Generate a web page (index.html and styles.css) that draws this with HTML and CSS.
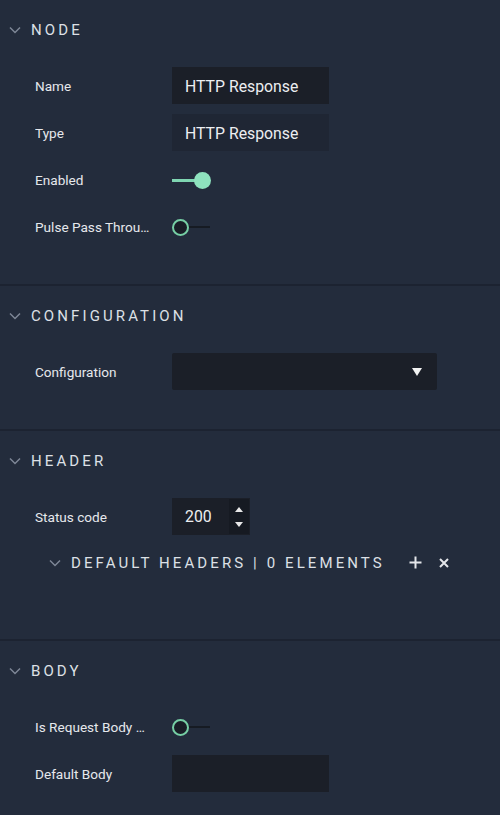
FILE: index.html
```html
<!DOCTYPE html>
<html>
<head>
<meta charset="utf-8">
<link rel="stylesheet" href="styles.css">
</head>
<body>
<div class="panel">
  <section class="sec">
    <div class="sec-head">
      <svg class="chev" width="12" height="8" viewBox="0 0 12 8"><path d="M1 1.5 L6 6.5 L11 1.5" fill="none" stroke="#7e8796" stroke-width="1.5"/></svg>
      <span>NODE</span>
    </div>
    <div class="rows">
      <div class="row"><div class="label">Name</div><div class="input">HTTP Response</div></div>
      <div class="row"><div class="label">Type</div><div class="input ro">HTTP Response</div></div>
      <div class="row"><div class="label">Enabled</div><div class="toggle on"><span class="track"></span><span class="knob"></span></div></div>
      <div class="row"><div class="label">Pulse Pass Through</div><div class="toggle off"><span class="track"></span><span class="knob"></span></div></div>
    </div>
  </section>
  <section class="sec">
    <div class="sec-head">
      <svg class="chev" width="12" height="8" viewBox="0 0 12 8"><path d="M1 1.5 L6 6.5 L11 1.5" fill="none" stroke="#7e8796" stroke-width="1.5"/></svg>
      <span>CONFIGURATION</span>
    </div>
    <div class="rows">
      <div class="row"><div class="label">Configuration</div><div class="select"><svg width="10" height="8" viewBox="0 0 10 8"><path d="M0 0 H10 L5 8 Z" fill="#f2f2f2"/></svg></div></div>
    </div>
  </section>
  <section class="sec">
    <div class="sec-head">
      <svg class="chev" width="12" height="8" viewBox="0 0 12 8"><path d="M1 1.5 L6 6.5 L11 1.5" fill="none" stroke="#7e8796" stroke-width="1.5"/></svg>
      <span>HEADER</span>
    </div>
    <div class="rows">
      <div class="row"><div class="label">Status code</div>
        <div class="number"><span class="num">200</span>
          <div class="spin">
            <svg width="8" height="5" viewBox="0 0 8 5"><path d="M0 5 L4 0 L8 5 Z" fill="#e8e8e8"/></svg>
            <svg width="8" height="5" viewBox="0 0 8 5"><path d="M0 0 L8 0 L4 5 Z" fill="#e8e8e8"/></svg>
          </div>
        </div>
      </div>
      <div class="sub-head">
        <svg class="chev" width="12" height="8" viewBox="0 0 12 8"><path d="M1 1.5 L6 6.5 L11 1.5" fill="none" stroke="#7e8796" stroke-width="1.5"/></svg>
        <span>DEFAULT HEADERS | 0 ELEMENTS</span>
        <svg class="plus" width="13" height="13" viewBox="0 0 13 13"><path d="M6.5 0.5 V12.5 M0.5 6.5 H12.5" stroke="#e4e6ea" stroke-width="2"/></svg>
        <svg class="cross" width="10" height="10" viewBox="0 0 10 10"><path d="M1 1 L9 9 M9 1 L1 9" stroke="#e4e6ea" stroke-width="2"/></svg>
      </div>
    </div>
  </section>
  <section class="sec last">
    <div class="sec-head">
      <svg class="chev" width="12" height="8" viewBox="0 0 12 8"><path d="M1 1.5 L6 6.5 L11 1.5" fill="none" stroke="#7e8796" stroke-width="1.5"/></svg>
      <span>BODY</span>
    </div>
    <div class="rows">
      <div class="row"><div class="label">Is Request Body Required</div><div class="toggle off"><span class="track"></span><span class="knob"></span></div></div>
      <div class="row"><div class="label">Default Body</div><div class="input"></div></div>
    </div>
  </section>
</div>
</body>
</html>
```

FILE: styles.css
```css
html, body {
  margin: 0;
  padding: 0;
  background: #232c3c;
}
body {
  width: 500px;
  height: 815px;
  overflow: hidden;
  font-family: Roboto, "Liberation Sans", sans-serif;
  color: #e3e5e9;
}
.panel {
  display: flex;
  flex-direction: column;
}
.sec {
  background: #232c3c;
  border-bottom: 2px solid #1c2331;
  padding-bottom: 39px;
}
.sec.last {
  border-bottom: none;
}
.sec-head {
  height: 57px;
  display: flex;
  align-items: center;
  padding-left: 9px;
  padding-top: 3px;
  box-sizing: border-box;
}
.chev {
  margin-right: 10px;
}
.sec-head span, .sub-head span {
  font-size: 15px;
  letter-spacing: 3.1px;
  color: #dde0e6;
  font-weight: 400;
}
.rows {
  display: flex;
  flex-direction: column;
  gap: 10px;
  margin-top: 10px;
  padding-left: 35px;
}
.row {
  height: 37px;
  display: flex;
  align-items: center;
}
.label {
  width: 116px;
  margin-right: 21px;
  font-size: 13.6px;
  color: #e6e8ec;
  white-space: nowrap;
  overflow: hidden;
  text-overflow: ellipsis;
}
.input {
  width: 157px;
  height: 37px;
  box-sizing: border-box;
  background: #1b1f28;
  padding-left: 13px;
  padding-top: 1px;
  display: flex;
  align-items: center;
  font-size: 15.8px;
  color: #eceef1;
}
.input.ro {
  background: #1f2634;
}
.toggle {
  position: relative;
  width: 40px;
  height: 20px;
}
.toggle .track {
  position: absolute;
  top: 9px;
  height: 2px;
}
.toggle .knob {
  position: absolute;
  border-radius: 50%;
  box-sizing: border-box;
}
.toggle.on .track {
  left: 0;
  width: 30px;
  background: #7fd6b2;
  top: 9px;
  height: 3px;
}
.toggle.on .knob {
  left: 22px;
  top: 2px;
  width: 17px;
  height: 17px;
  background: #8ee2be;
}
.toggle.off .track {
  left: 14px;
  width: 24px;
  background: #161b23;
}
.toggle.off .knob {
  left: 0;
  top: 2px;
  width: 17px;
  height: 17px;
  background: #191e27;
  border: 2px solid #76cfa5;
}
.select {
  width: 265px;
  height: 37px;
  background: #1b1f28;
  border-radius: 2px;
  display: flex;
  align-items: center;
  justify-content: flex-end;
  padding-right: 15px;
  box-sizing: border-box;
}
.number {
  width: 78px;
  height: 37px;
  background: #1b1f28;
  display: flex;
  align-items: stretch;
}
.num {
  flex: 1;
  padding-left: 13px;
  display: flex;
  align-items: center;
  font-size: 15.8px;
  color: #eceef1;
}
.spin {
  width: 20px;
  margin: 1px 1px 1px 0;
  background: #161a22;
  display: flex;
  flex-direction: column;
  align-items: center;
  justify-content: center;
  gap: 10px;
}
.sub-head {
  height: 37px;
  display: flex;
  align-items: center;
  padding-left: 14px;
  margin-top: -1px;
  margin-bottom: 19px;
}
.sub-head .plus {
  margin-left: 24px;
}
.sub-head .cross {
  margin-left: 17px;
}
```
